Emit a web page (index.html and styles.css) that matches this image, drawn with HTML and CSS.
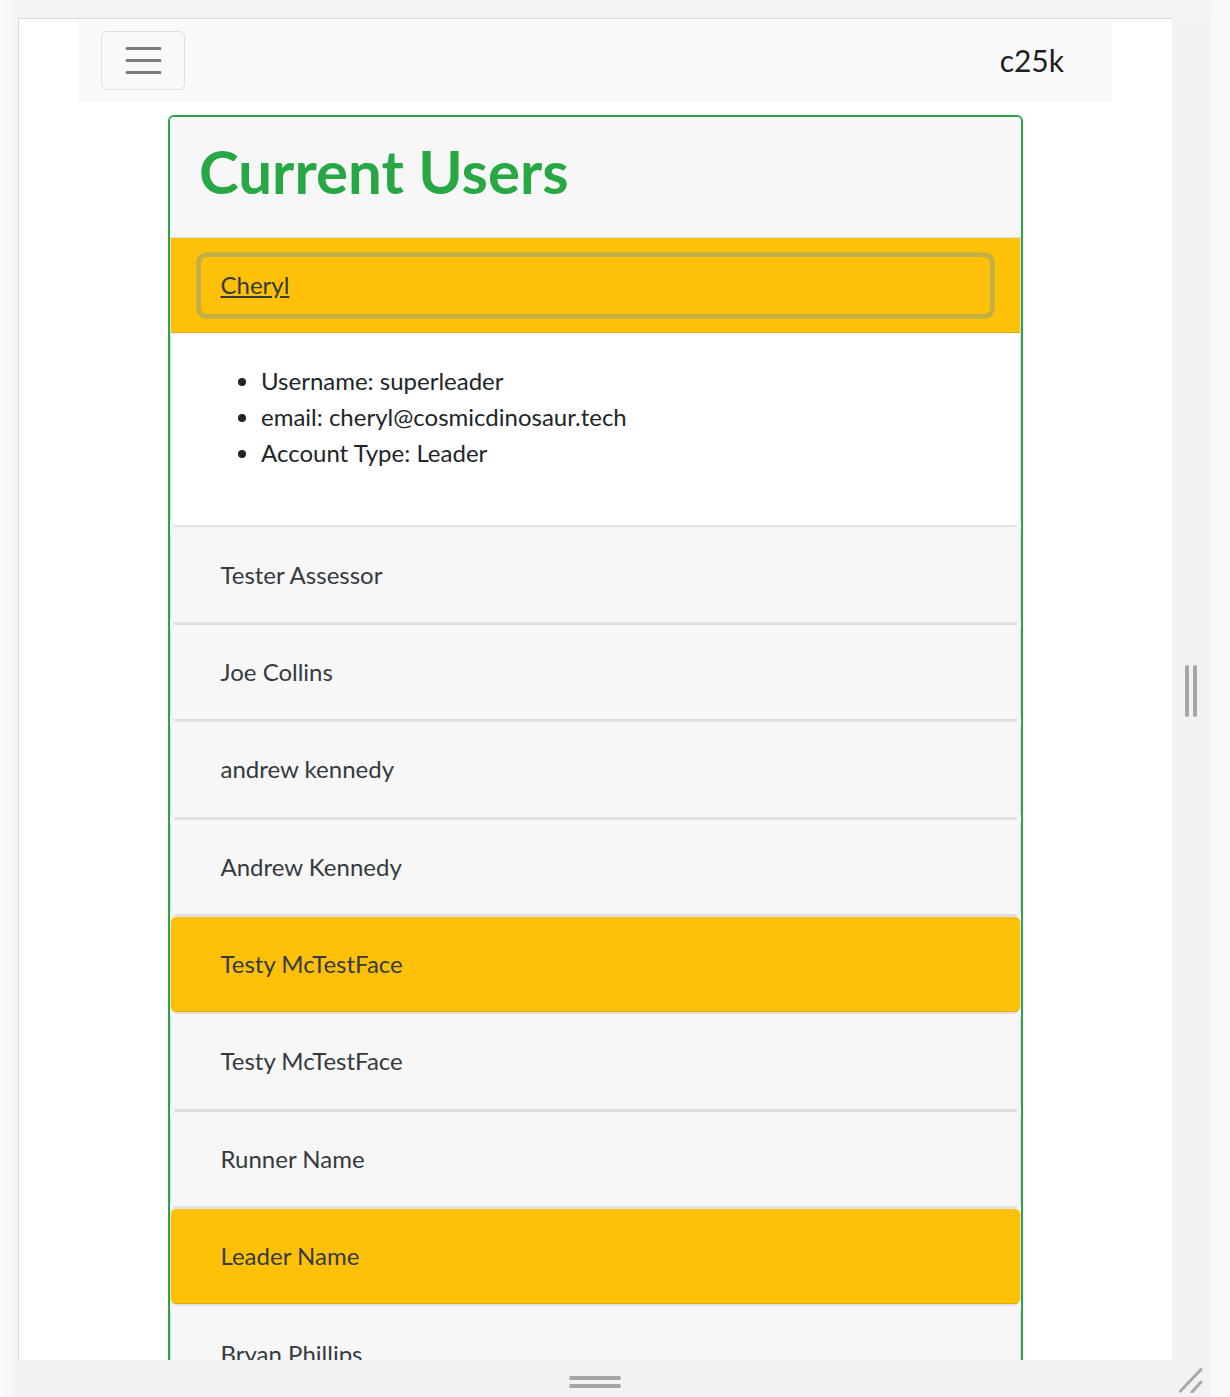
FILE: index.html
```html
<!DOCTYPE html>
<html lang="en">
<head>
<meta charset="utf-8">
<title>c25k - Current Users</title>
<link rel="stylesheet" href="styles.css">
</head>
<body>
<div class="stage">
  <div class="device">
    <div class="device-row">
      <div class="viewport">
        <nav class="navbar">
          <button class="toggler" type="button" aria-label="Toggle navigation">
            <svg class="toggler-icon" viewBox="0 0 30 30" width="45" height="45"><path d="M4 7h22M4 15h22M4 23h22" stroke="rgba(0,0,0,0.5)" stroke-width="2" stroke-linecap="round" fill="none"/></svg>
          </button>
          <span class="brand">c25k</span>
        </nav>
        <div class="users">
          <div class="users-head"><h1>Current Users</h1></div>
          <div class="acc">
            <div class="acc-card">
              <div class="acc-head warn"><button class="acc-btn active" type="button">Cheryl</button></div>
              <div class="acc-body">
                <ul>
                  <li>Username: superleader</li>
                  <li>email: cheryl@cosmicdinosaur.tech</li>
                  <li>Account Type: Leader</li>
                </ul>
              </div>
            </div>
            <div class="acc-card"><div class="acc-head"><button class="acc-btn" type="button">Tester Assessor</button></div></div>
            <div class="acc-card"><div class="acc-head"><button class="acc-btn" type="button">Joe Collins</button></div></div>
            <div class="acc-card"><div class="acc-head"><button class="acc-btn" type="button">andrew kennedy</button></div></div>
            <div class="acc-card"><div class="acc-head"><button class="acc-btn" type="button">Andrew Kennedy</button></div></div>
            <div class="acc-card"><div class="acc-head warn"><button class="acc-btn" type="button">Testy McTestFace</button></div></div>
            <div class="acc-card"><div class="acc-head"><button class="acc-btn" type="button">Testy McTestFace</button></div></div>
            <div class="acc-card"><div class="acc-head"><button class="acc-btn" type="button">Runner Name</button></div></div>
            <div class="acc-card"><div class="acc-head warn"><button class="acc-btn" type="button">Leader Name</button></div></div>
            <div class="acc-card"><div class="acc-head"><button class="acc-btn" type="button">Bryan Phillips</button></div></div>
          </div>
        </div>
      </div>
      <div class="rside"><span class="grip-v"><i></i><i></i></span></div>
    </div>
    <div class="bside">
      <div class="bgrip"><span class="grip-h"><i></i><i></i></span></div>
      <div class="bcorner">
        <svg width="24" height="25" viewBox="0 0 24 25"><path d="M1.5 23 L22 1.5 M13 24 L22 14" stroke="#a8a8a8" stroke-width="3" stroke-linecap="round" fill="none"/></svg>
      </div>
    </div>
  </div>
</div>
</body>
</html>
```

FILE: styles.css
```css
html, body {
  margin: 0;
  padding: 0;
}
body {
  background: #f4f5f5;
  font-family: Lato, "Open Sans", sans-serif;
  color: #212529;
}
.stage {
  height: 1397px;
  box-sizing: border-box;
  padding: 18px 0 0 18px;
  overflow: hidden;
  background: linear-gradient(to right, #fafafa 0, #f3f4f4 16px, #f3f4f4 1210px, #f7f8f8 1211px);
}
.device {
  width: 1192px;
}
.device-row {
  display: flex;
}
.viewport {
  width: 1154px;
  height: 1342px;
  box-sizing: border-box;
  border-top: 1px solid #d9d9d9;
  border-left: 1px solid #d9d9d9;
  background: #fff;
  overflow: hidden;
}
.rside {
  width: 38px;
  margin-top: 1px;
  background: #f1f2f4;
  display: flex;
  align-items: center;
  justify-content: center;
}
.grip-v {
  display: flex;
  gap: 4px;
  margin-top: 2px;
}
.grip-v i {
  display: block;
  width: 4px;
  height: 52px;
  border-radius: 2px;
  background: #a6a6a6;
}
.bside {
  display: flex;
  height: 37px;
  background: #f1f2f4;
}
.bgrip {
  width: 1154px;
  display: flex;
  justify-content: center;
  padding-top: 16px;
  box-sizing: border-box;
}
.grip-h {
  display: flex;
  flex-direction: column;
  gap: 4.5px;
}
.grip-h i {
  display: block;
  width: 52px;
  height: 3.5px;
  border-radius: 2px;
  background: #a6a6a6;
}
.bcorner {
  width: 38px;
  display: flex;
  justify-content: center;
  padding-top: 8px;
  box-sizing: border-box;
}

/* page inside viewport */
.navbar {
  width: 1034px;
  margin: 0 0 0 59px;
  background: #f8f9fa;
  padding: 12px 24px 12px 23px;
  box-sizing: border-box;
  display: flex;
  align-items: center;
  justify-content: space-between;
}
.toggler {
  width: 84px;
  height: 59px;
  padding: 0;
  margin: 0;
  border: 1px solid #dedfe0;
  border-radius: 6px;
  background: transparent;
  display: flex;
  align-items: center;
  justify-content: center;
}
.toggler-icon {
  display: block;
}
.brand {
  font-size: 30px;
  line-height: 45px;
  color: rgba(0, 0, 0, 0.9);
  margin-right: 24px;
}
.users {
  width: 855px;
  box-sizing: border-box;
  margin: 13px 0 0 149px;
  border: 2px solid #28a745;
  border-radius: 6px;
}
.users-head {
  background: #f7f7f7;
  padding: 18px 30px 18px 29px;
  border-bottom: 1px solid #dfdfdf;
  border-radius: 4px 4px 0 0;
}
.users-head h1 {
  margin: 0 0 12px;
  font-size: 60px;
  line-height: 72px;
  font-weight: 700;
  color: #28a745;
}
.acc-card {
  border: 1px solid #dfdfdf;
  border-radius: 6px;
  overflow: hidden;
  background: #fff;
}
.acc-card:first-child {
  border-top: 0;
  border-radius: 0 0 6px 6px;
}
.acc-head {
  padding: 18.7px 30px;
  background: #f7f7f7;
  border-bottom: 1px solid #dfdfdf;
}
.acc-head.warn {
  background: #ffc107;
  border-bottom-color: #e0aa07;
}
.acc-btn {
  display: block;
  width: 100%;
  text-align: left;
  font-family: inherit;
  font-size: 24px;
  line-height: 36px;
  color: #343a40;
  background: transparent;
  border: 1px solid transparent;
  border-radius: 6px;
  padding: 9.5px 18.5px;
  margin: 0;
}
.acc-btn.active {
  text-decoration: underline;
  box-shadow: 0 0 0 4.8px rgba(0, 123, 255, 0.25);
}
.acc-body {
  padding: 30px 30px 31px;
}
.acc-body ul {
  margin: 0 0 23px;
  padding-left: 60px;
  font-size: 24px;
  line-height: 36px;
}
```
